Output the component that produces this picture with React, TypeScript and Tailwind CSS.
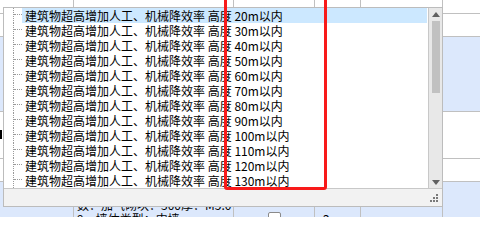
import React from 'react'

const heights = ['20m', '30m', '40m', '50m', '60m', '70m', '80m', '90m', '100m', '110m', '120m', '130m']

// background sheet row: fixed cell widths so the column lines fall where the sheet has them
function SheetRow({ className = '', children }: { className?: string; children?: React.ReactNode[] }) {
  const cells = children ?? []
  return (
    <div className={`flex shrink-0 border-b border-[#c0c0c0] ${className}`}>
      <div className="w-[74px] shrink-0 border-r border-[#c0c0c0]">{cells[0]}</div>
      <div className="w-[160px] shrink-0 border-r border-[#c0c0c0] overflow-hidden">{cells[1]}</div>
      <div className="w-[81px] shrink-0 border-r border-[#c0c0c0]">{cells[2]}</div>
      <div className="w-[46px] shrink-0 border-r border-[#c0c0c0]">{cells[3]}</div>
      <div className="w-[82px] shrink-0 border-r border-[#c0c0c0]">{cells[4]}</div>
      <div className="flex-1" />
    </div>
  )
}

function Arrow({ down = false }: { down?: boolean }) {
  return (
    <svg width="8" height="5" viewBox="0 0 8 5">
      {down ? <polygon points="0,0 8,0 4,5" fill="#606060" /> : <polygon points="0,5 8,5 4,0" fill="#606060" />}
    </svg>
  )
}

export default function App() {
  return (
    <div
      className="relative w-[480px] h-[217px] overflow-hidden bg-white text-[12px] text-black"
      style={{ fontFamily: '"Noto Sans CJK SC", "Noto Sans", sans-serif' }}
    >
      {/* sheet behind the dropdown */}
      <div className="flex flex-col h-full">
        <SheetRow className="h-[14px]" />
        <SheetRow className="h-[23px]" />
        <SheetRow className="h-[75px] bg-[#dce8fc]" />
        <SheetRow className="h-[47px]">
          {[<div key="m" className="w-[2px] h-[9px] mt-[18px] bg-black" />]}
        </SheetRow>
        <SheetRow className="h-[23px]" />
        <SheetRow className="h-[60px] bg-[#dce8fc]">
          {[
            null,
            <div key="t" className="pl-[3px] pt-[16px] leading-[14px] whitespace-nowrap">
              <div>数：加气砌块：300厚：M5.0</div>
              <div>9、墙体类型：内墙</div>
            </div>,
            <div key="c" className="flex justify-center pt-[30px]">
              <div className="w-[13px] h-[13px] border border-[#8a8a8a] rounded-[2px] bg-white" />
            </div>,
            <div key="n" className="pl-[8px] pt-[30px] leading-[14px]">2</div>,
            null,
          ]}
        </SheetRow>
      </div>

      {/* dropdown popup */}
      <div className="absolute left-[3px] top-[7px] w-[440px] h-[200px] border border-[#bcbcbc] bg-white flex flex-col">
        <div className="flex h-[180px] shrink-0">
          <div className="flex-1 flex flex-col">
            {heights.map((h, i) => (
              <div key={h} className="flex h-[15px] shrink-0">
                <div className="w-[9px] shrink-0" />
                <div className="w-[9px] shrink-0 border-l border-dotted border-[#9a9a9a]">
                  <div className="h-[7px] w-[8px] border-b border-dotted border-[#9a9a9a]" />
                </div>
                <div
                  className={`flex-1 mr-[1px] pl-[3px] leading-[15px] whitespace-nowrap overflow-hidden ${
                    i === 0 ? 'bg-[#cce8ff]' : ''
                  }`}
                >
                  建筑物超高增加人工、机械降效率 高度 {h}以内
                </div>
              </div>
            ))}
          </div>
          {/* scrollbar */}
          <div className="w-[14px] shrink-0 border-l border-[#c8c8c8] bg-[#e8e8e8] flex flex-col items-center">
            <div className="h-[12px] flex items-center justify-center">
              <Arrow />
            </div>
            <div className="w-[8px] h-[72px] mt-[1px] bg-[#c1c1c1]" />
            <div className="flex-1" />
            <div className="h-[12px] flex items-center justify-center">
              <Arrow down />
            </div>
          </div>
        </div>
        <div className="flex-1 border-t border-[#c8c8c8] bg-[#f2f2f2] flex justify-end items-center pr-[4px]">
          <svg width="8" height="8" viewBox="0 0 8 8">
            <rect x="6" y="0" width="2" height="2" fill="#7a7a7a" />
            <rect x="3" y="3" width="2" height="2" fill="#7a7a7a" />
            <rect x="6" y="3" width="2" height="2" fill="#7a7a7a" />
            <rect x="0" y="6" width="2" height="2" fill="#7a7a7a" />
            <rect x="3" y="6" width="2" height="2" fill="#7a7a7a" />
            <rect x="6" y="6" width="2" height="2" fill="#7a7a7a" />
          </svg>
        </div>
      </div>

      {/* red highlight frame drawn over the screenshot */}
      <div className="absolute left-[224px] top-[-10px] w-[103px] h-[200px] border-[3px] border-[#f81a1a] rounded-[3px]" />
    </div>
  )
}
